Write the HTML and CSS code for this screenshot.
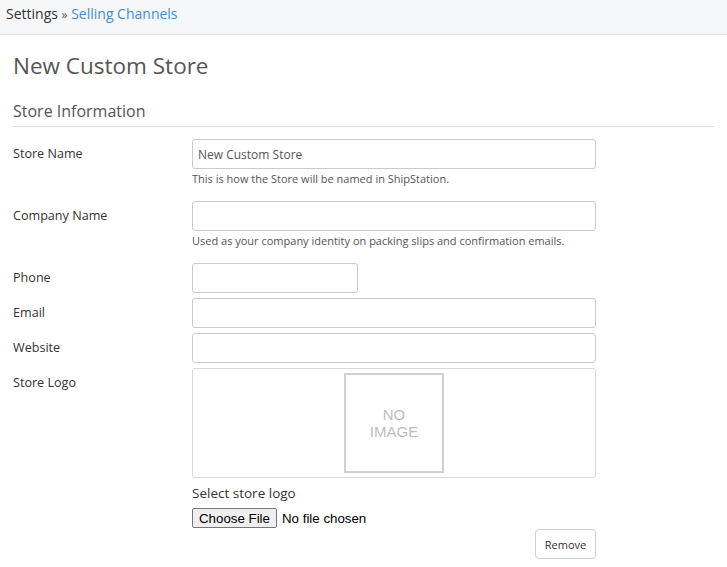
FILE: index.html
```html
<!DOCTYPE html>
<html>
<head>
<meta charset="utf-8">
<link rel="stylesheet" href="styles.css">
</head>
<body>
<div class="topbar">
  <span class="crumb">Settings</span> <span class="sep">»</span> <a class="crumb-link" href="#">Selling Channels</a>
</div>
<div class="content">
  <h1 class="title">New Custom Store</h1>
  <h2 class="section">Store Information</h2>
  <div class="form">
    <div class="row">
      <label class="label">Store Name</label>
      <div class="field">
        <input class="input wide" type="text" value="New Custom Store">
        <div class="help">This is how the Store will be named in ShipStation.</div>
      </div>
    </div>
    <div class="row">
      <label class="label">Company Name</label>
      <div class="field">
        <input class="input wide" type="text">
        <div class="help">Used as your company identity on packing slips and confirmation emails.</div>
      </div>
    </div>
    <div class="row tight">
      <label class="label">Phone</label>
      <div class="field"><input class="input short" type="text"></div>
    </div>
    <div class="row tight">
      <label class="label">Email</label>
      <div class="field"><input class="input wide" type="text"></div>
    </div>
    <div class="row tight">
      <label class="label">Website</label>
      <div class="field"><input class="input wide" type="text"></div>
    </div>
    <div class="row tight">
      <label class="label">Store Logo</label>
      <div class="field">
        <div class="logo-box">
          <div class="no-image">NO<br>IMAGE</div>
        </div>
        <div class="select-label">Select store logo</div>
        <div class="file-row"><button class="choose">Choose File</button><span class="nofile">No file chosen</span></div>
        <div class="remove-row"><button class="remove">Remove</button></div>
      </div>
    </div>
  </div>
</div>
</body>
</html>
```
FILE: styles.css
```css
html, body { margin: 0; padding: 0; background: #fff; }
body { font-family: "Open Sans", Lato, Arial, sans-serif; color: #333; }
.topbar {
  height: 34px;
  background: #f6f7f9;
  border-bottom: 1px solid #e2e3e5;
  box-sizing: content-box;
  padding-left: 6px;
  font-size: 14px;
  line-height: 27px;
}
.crumb { color: #333; }
.sep { color: #555; font-size: 12px; }
.crumb-link { color: #3c8fd6; text-decoration: none; }
.content { padding: 0 13px; }
.title {
  margin: 16px 0 0;
  font-size: 22.5px;
  font-weight: 400;
  color: #555;
  line-height: 30px;
}
.section {
  margin: 19px 0 0;
  font-size: 16px;
  font-weight: 400;
  color: #555;
  line-height: 22px;
  padding-bottom: 4px;
  border-bottom: 1px solid #dcdcdc;
}
.form { padding-top: 12px; }
.row { display: flex; margin-bottom: 15px; }
.row.tight { margin-bottom: 5px; }
.label {
  width: 179px;
  flex: none;
  font-size: 12.6px;
  line-height: 30px;
  color: #333;
}
.field { display: flex; flex-direction: column; }
.input {
  box-sizing: border-box;
  height: 30px;
  border: 1px solid #cacaca;
  border-radius: 3px;
  padding: 0 5px;
  font-family: inherit;
  font-size: 12px;
  color: #555;
  outline: none;
}
.wide { width: 404px; }
.short { width: 166px; }
.help {
  font-size: 11px;
  color: #555;
  margin-top: 3px;
  line-height: 14px;
}
.logo-box {
  box-sizing: border-box;
  width: 404px;
  height: 110px;
  border: 1px solid #d8d8d8;
  border-radius: 3px;
  display: flex;
  align-items: center;
  justify-content: center;
}
.no-image {
  box-sizing: border-box;
  width: 100px;
  height: 100px;
  border: 2px solid #d0d0d0;
  display: flex;
  align-items: center;
  justify-content: center;
  text-align: center;
  color: #bdbdbd;
  font-size: 15px;
  line-height: 17px;
  font-family: Arial, "Liberation Sans", sans-serif;
}
.select-label {
  font-size: 13.5px;
  color: #333;
  margin-top: 6px;
  line-height: 18px;
}
.file-row { display: flex; align-items: center; margin-top: 6px; }
.choose {
  height: 20px;
  width: 85px;
  box-sizing: border-box;
  padding: 0;
  font-family: Arial, "Liberation Sans", sans-serif;
  font-size: 13.3px;
  color: #000;
  background: #efefef;
  border: 1px solid #767676;
  border-radius: 2px;
}
.nofile {
  font-family: Arial, "Liberation Sans", sans-serif;
  font-size: 13.3px;
  color: #000;
  margin-left: 5px;
}
.remove-row { display: flex; justify-content: flex-end; margin-top: 1px; }
.remove {
  width: 61px;
  height: 30px;
  background: #fff;
  border: 1px solid #cfcfcf;
  border-radius: 4px;
  font-family: inherit;
  font-size: 11px;
  color: #333;
  padding: 0;
}
```
